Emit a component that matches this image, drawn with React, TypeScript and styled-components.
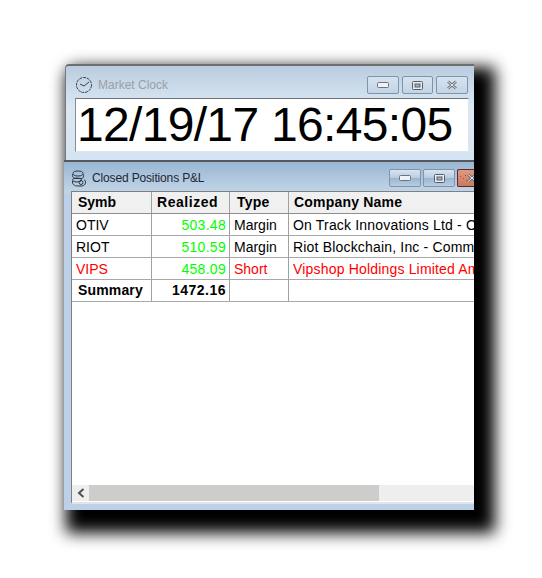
import React from "react";
import styled, { createGlobalStyle } from "styled-components";

const Global = createGlobalStyle`
  html, body { margin: 0; padding: 0; background: #fff; }
  body { font-family: "Liberation Sans", Arial, sans-serif; width: 542px; height: 578px; overflow: hidden; }
`;

const Page = styled.div`
  width: 542px;
  height: 578px;
  padding: 64px 0 0 65px;
  box-sizing: border-box;
`;

const Stack = styled.div`
  width: 409px;
  height: 446px;
  display: flex;
  flex-direction: column;
  border-radius: 3px 0 0 0;
  box-shadow: 11px 13px 16px 10px #000;
`;

const ClockWindow = styled.section`
  height: 96px;
  box-sizing: border-box;
  border-top: 2px solid #6e6e6e;
  border-left: 1px solid #77797c;
  border-radius: 4px 0 0 0;
  background: linear-gradient(#b9cde0, #dbe8f4 45%, #d5e4f2);
  padding: 0 5px 0 9px;
  display: flex;
  flex-direction: column;
`;

const TitleBar = styled.header<{ $h: number; $top: number }>`
  height: ${(p) => p.$h}px;
  padding-top: ${(p) => p.$top}px;
  box-sizing: border-box;
  flex: none;
  display: flex;
  align-items: center;
  gap: 5px;
`;

const TitleText = styled.span<{ $muted?: boolean }>`
  font-size: 12px;
  letter-spacing: ${(p) => (p.$muted ? "0" : "-0.15px")};
  color: ${(p) => (p.$muted ? "#9a9ea4" : "#1d2733")};
  flex: 1;
`;

const ButtonRow = styled.div<{ $gap: number; $right: number }>`
  display: flex;
  gap: ${(p) => p.$gap}px;
  margin-right: ${(p) => p.$right}px;
`;

const CaptionButton = styled.div<{ $w: number; $h: number; $dark?: boolean }>`
  width: ${(p) => p.$w}px;
  height: ${(p) => p.$h}px;
  box-sizing: border-box;
  border: 1px solid #7f93ab;
  border-radius: 2px;
  display: flex;
  align-items: center;
  justify-content: center;
  overflow: hidden;
  background: ${(p) =>
    p.$dark
      ? "linear-gradient(#d8e4f0, #b8cce0 50%, #9cb6d2 52%, #b9cde2)"
      : "linear-gradient(#d7e3ef, #c3d4e6)"};
`;

const CloseButton = styled.div`
  width: 17px;
  height: 18px;
  box-sizing: border-box;
  border: 1px solid #5b2a34;
  border-right: none;
  border-radius: 2px 0 0 2px;
  display: flex;
  align-items: center;
  padding-left: 8px;
  overflow: hidden;
  background:
    radial-gradient(circle, #c23a3a 0.8px, transparent 1px) 1px 5px / 3px 3px no-repeat,
    radial-gradient(circle, #c23a3a 0.8px, transparent 1px) 4px 7px / 3px 3px no-repeat,
    radial-gradient(circle, #c23a3a 0.8px, transparent 1px) 6px 4px / 3px 3px no-repeat,
    radial-gradient(circle, #c23a3a 0.8px, transparent 1px) 7px 9px / 3px 3px no-repeat,
    linear-gradient(#dd9a80, #cb7a5c);
`;

const ClockFace = styled.div`
  height: 54px;
  flex: none;
  box-sizing: border-box;
  background: #fff;
  border-top: 1px solid #6f7276;
  border-left: 1px solid #8a8d90;
  border-right: 1px solid #dfe5ea;
  border-bottom: 1px solid #dfe5ea;
  font-size: 48px;
  line-height: 51px;
  letter-spacing: -0.68px;
  color: #000;
  padding-left: 1px;
  white-space: nowrap;
`;

const PositionsWindow = styled.section`
  flex: 1;
  min-height: 0;
  margin-left: -1px;
  width: 410px;
  box-sizing: border-box;
  border-top: 2px solid #55585c;
  background: linear-gradient(#9ab6d3, #c3d6e8 31px, #bcd1e8 32px);
  padding-left: 7px;
  display: flex;
  flex-direction: column;
  overflow: hidden;
`;

const Sheet = styled.div`
  flex: 1;
  min-height: 0;
  margin-bottom: 6px;
  background: #fff;
  border-left: 1px solid #7d7f82;
  border-top: 1px solid #7d7f82;
  border-bottom: 2px solid #e4e4e4;
  display: flex;
  flex-direction: column;
  overflow: hidden;
`;

const Table = styled.div`
  flex: 1;
  min-height: 0;
`;

const Row = styled.div<{ $head?: boolean }>`
  display: grid;
  grid-template-columns: 80px 78px 59px 260px;
  height: 22px;
  box-sizing: border-box;
  border-bottom: 1px solid ${(p) => (p.$head ? "#8f8f8f" : "#a8a8a8")};
  background: ${(p) => (p.$head ? "#f0f0f0" : "#fff")};
`;

const Cell = styled.div<{ $right?: boolean; $color?: string; $inset?: number; $track?: number }>`
  border-right: 1px solid #a0a0a0;
  box-sizing: border-box;
  font-size: 14px;
  line-height: 22px;
  letter-spacing: ${(p) => p.$track ?? 0}px;
  color: ${(p) => p.$color ?? "#000"};
  text-align: ${(p) => (p.$right ? "right" : "left")};
  padding: ${(p) => (p.$right ? "0 3px 0 0" : `0 0 0 ${p.$inset ?? 4}px`)};
  white-space: nowrap;
  overflow: hidden;
`;

const BoldCell = styled(Cell)`
  font-weight: 700;
  line-height: 21px;
`;

const HeadCell = styled(BoldCell)`
  line-height: 20px;
`;

const Scrollbar = styled.div`
  height: 16px;
  flex: none;
  background: #eeeeee;
  display: flex;
  margin-bottom: 1px;
`;

const ScrollArrow = styled.div`
  width: 17px;
  display: flex;
  align-items: center;
  justify-content: center;
`;

const ScrollThumb = styled.div`
  width: 290px;
  background: #cdcdcb;
`;

const ClockIcon = () => (
  <svg width="18" height="18" viewBox="0 0 18 18" fill="none" stroke="#3a3f46" strokeWidth="1">
    <circle cx="9" cy="9" r="7.5" strokeDasharray="3 0.8" />
    <path d="M9 10 L14 6 M9 10 L5 8" />
  </svg>
);

const StackIcon = () => (
  <svg width="16" height="17" viewBox="0 0 16 17" fill="none" stroke="#2e3540" strokeWidth="1">
    <ellipse cx="7" cy="3.5" rx="5" ry="2.5" />
    <path d="M2 4 C0.5 6 2 8.5 5 8.5 L10 8.5 C13 8.5 13 5.5 12 4" />
    <ellipse cx="6" cy="10" rx="4.5" ry="2" />
    <path d="M1.5 11 C1 14 3 16 7 16 L11 16 C15 15.5 15.5 11 13 9.5" />
    <circle cx="10" cy="12.5" r="2" />
  </svg>
);

const MinGlyph = () => (
  <svg width="12" height="6" viewBox="0 0 12 6">
    <rect x="0.5" y="0.5" width="11" height="5" rx="1" fill="#eef2f6" stroke="#6c737c" />
  </svg>
);

const MaxGlyph = () => (
  <svg width="11" height="9" viewBox="0 0 11 9" fill="none">
    <rect x="0.5" y="0.5" width="10" height="8" rx="1" fill="#e8eef4" stroke="#565d66" />
    <rect x="3" y="3" width="5" height="3" fill="#a7b6c6" stroke="#565d66" strokeWidth="1" />
  </svg>
);

const CloseGlyph = () => (
  <svg width="12" height="10" viewBox="0 0 12 10" style={{ flex: "none" }}>
    <path d="M2 1.5 L10 8.5 M10 1.5 L2 8.5" stroke="#666c74" strokeWidth="2.6" />
    <path d="M2 1.5 L10 8.5 M10 1.5 L2 8.5" stroke="#eef2f6" strokeWidth="1" />
  </svg>
);

const ArrowLeft = () => (
  <svg width="8" height="10" viewBox="0 0 8 10" fill="none">
    <path d="M6.5 1 L2 5 L6.5 9" stroke="#505050" strokeWidth="2" />
  </svg>
);

const rows = [
  { s: "OTIV", r: "503.48", t: "Margin", n: "On Track Innovations Ltd - Ordinary", c: "#000" },
  { s: "RIOT", r: "510.59", t: "Margin", n: "Riot Blockchain, Inc - Common Stock", c: "#000" },
  { s: "VIPS", r: "458.09", t: "Short", n: "Vipshop Holdings Limited American", c: "#ff0000" },
];

export default function App() {
  return (
    <>
      <Global />
      <Page>
        <Stack>
          <ClockWindow>
            <TitleBar $h={32} $top={6}>
              <ClockIcon />
              <TitleText $muted>Market Clock</TitleText>
              <ButtonRow $gap={3} $right={1}>
                <CaptionButton $w={32} $h={18}><MinGlyph /></CaptionButton>
                <CaptionButton $w={31} $h={18}><MaxGlyph /></CaptionButton>
                <CaptionButton $w={32} $h={18}><CloseGlyph /></CaptionButton>
              </ButtonRow>
            </TitleBar>
            <ClockFace>12/19/17 16:45:05</ClockFace>
          </ClockWindow>
          <PositionsWindow>
            <TitleBar $h={29} $top={3}>
              <StackIcon />
              <TitleText>Closed Positions P&amp;L</TitleText>
              <ButtonRow $gap={2} $right={0}>
                <CaptionButton $w={32} $h={18} $dark><MinGlyph /></CaptionButton>
                <CaptionButton $w={32} $h={18} $dark><MaxGlyph /></CaptionButton>
                <CloseButton><CloseGlyph /></CloseButton>
              </ButtonRow>
            </TitleBar>
            <Sheet>
              <Table>
                <Row $head>
                  <HeadCell $inset={6}>Symb</HeadCell>
                  <HeadCell $inset={5} $track={0.55}>Realized</HeadCell>
                  <HeadCell $inset={7} $track={0.2}>Type</HeadCell>
                  <HeadCell $inset={5} $track={0.2}>Company Name</HeadCell>
                </Row>
                {rows.map((r) => (
                  <Row key={r.s}>
                    <Cell $color={r.c}>{r.s}</Cell>
                    <Cell $right $color="#00ff00" $track={0.3}>{r.r}</Cell>
                    <Cell $color={r.c}>{r.t}</Cell>
                    <Cell $color={r.c} $track={0.18}>{r.n}</Cell>
                  </Row>
                ))}
                <Row>
                  <BoldCell $inset={6} $track={0.15}>Summary</BoldCell>
                  <BoldCell $right $track={0.5}>1472.16</BoldCell>
                  <Cell />
                  <Cell />
                </Row>
              </Table>
              <Scrollbar>
                <ScrollArrow><ArrowLeft /></ScrollArrow>
                <ScrollThumb />
              </Scrollbar>
            </Sheet>
          </PositionsWindow>
        </Stack>
      </Page>
    </>
  );
}
